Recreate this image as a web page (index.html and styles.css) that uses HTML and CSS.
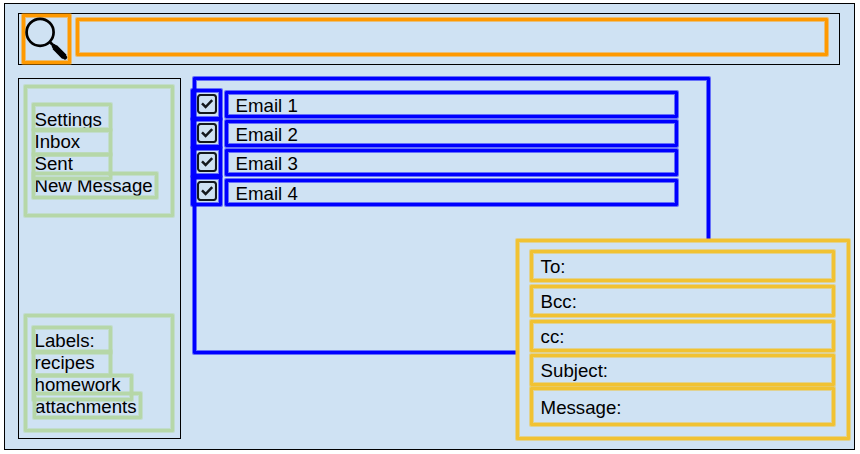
FILE: index.html
```html
<!DOCTYPE html>
<html lang="en">
<head>
<meta charset="utf-8">
<title>Mail</title>
<link rel="stylesheet" href="styles.css">
</head>
<body>
<svg class="defs" aria-hidden="true">
  <symbol id="check" viewBox="0 0 20 20">
    <rect x="1" y="1" width="18" height="18" rx="2.6" fill="none" stroke="#14191d" stroke-width="2.1"/>
    <path d="M5 9.4 8.6 13 15.2 6.2" fill="none" stroke="#14191d" stroke-width="2.5"/>
  </symbol>
</svg>
<div class="app">
  <header class="search">
    <div class="search-icon outline">
      <svg width="49" height="50" viewBox="0 0 49 50">
        <circle cx="18.1" cy="18.3" r="13.5" fill="none" stroke="#000" stroke-width="2.7"/>
        <path d="M27.6 27.8 32 32" stroke="#000" stroke-width="2.8"/>
        <path d="M32.6 33 42.4 42.8" stroke="#000" stroke-width="6"/>
        <path d="M32 32.4 43 43.4" stroke="#000" stroke-width="4.4" stroke-linecap="round"/>
      </svg>
    </div>
    <div class="search-input outline"></div>
  </header>
  <div class="body">
    <nav class="sidebar">
      <ul class="group outline folders">
        <li><span>Settings</span></li>
        <li><span>Inbox</span></li>
        <li><span>Sent</span></li>
        <li><span>New Message</span></li>
      </ul>
      <ul class="group outline labels">
        <li><span>Labels:</span></li>
        <li><span>recipes</span></li>
        <li><span>homework</span></li>
        <li><span>attachments</span></li>
      </ul>
    </nav>
    <main class="inbox outline">
      <div class="checks">
        <div class="check outline"><svg><use href="#check"/></svg></div>
        <div class="check outline"><svg><use href="#check"/></svg></div>
        <div class="check outline"><svg><use href="#check"/></svg></div>
        <div class="check outline"><svg><use href="#check"/></svg></div>
      </div>
      <div class="emails">
        <div class="email outline">Email 1</div>
        <div class="email outline">Email 2</div>
        <div class="email outline">Email 3</div>
        <div class="email outline last">Email 4</div>
      </div>
    </main>
    <form class="compose outline">
      <div class="field outline to">To:</div>
      <div class="field outline bcc">Bcc:</div>
      <div class="field outline cc">cc:</div>
      <div class="field outline subject">Subject:</div>
      <div class="field outline message">Message:</div>
    </form>
  </div>
</div>
</body>
</html>
```
FILE: styles.css
```css
* { box-sizing: border-box; }

body {
  margin: 0;
  padding: 3px 0 0 4px;
  background: #fff;
  color: #000;
  font: 18.67px/22px "Liberation Sans", Arial, sans-serif;
  overflow: hidden;
}

.defs { position: absolute; width: 0; height: 0; }

.app {
  width: 851px;
  height: 447px;
  padding: 9px 13px;
  border: 1px solid #000;
  background: #cfe2f3;
}

/* 3px line with a half-tone pixel on either side */
.outline,
.group li::after {
  border: 3px solid var(--line);
  border-radius: 1px;
  box-shadow: 0 0 0 1px var(--soft), inset 0 0 0 1px var(--soft);
}

.search {
  --line: #ff9900;
  --soft: rgba(255, 153, 0, .5);
  display: flex;
  gap: 5px;
  width: 822px;
  height: 52px;
  padding-left: 3px;
  border: 1px solid #000;
}
.search-icon { width: 49px; height: 50px; }
.search-icon svg { display: block; margin: -3px; }
.search-input { width: 752px; height: 38px; margin-top: 4px; }

.body {
  position: relative;
  display: flex;
  gap: 12px;
  margin-top: 13px;
}

.sidebar {
  --line: #b6d7a8;
  --soft: rgba(182, 215, 168, .5);
  display: flex;
  flex-direction: column;
  justify-content: space-between;
  width: 163px;
  height: 361px;
  padding: 6px 5px;
  border: 1px solid #000;
}
.group {
  isolation: isolate;
  width: 150px;
  margin: 0;
  padding: 15px 5px;
  list-style: none;
}
.folders { height: 132px; }
.labels { height: 118px; padding-top: 9px; }
.group li {
  position: relative;
  width: 80px;
  height: 27px;
  padding-left: 2.5px;
  white-space: nowrap;
}
.group li span { display: block; }
.group li::after {
  content: "";
  position: absolute;
  inset: 0;
  z-index: 1;
}
.folders li:nth-child(1) { height: 28px; padding-top: 6px; }
.folders li:nth-child(2) { margin-top: -2px; padding-top: 2px; }
.folders li:nth-child(3) { margin-top: -3px; }
.folders li:nth-child(4) { width: 126px; margin-top: -8px; padding-top: 3px; }
.labels li:nth-child(1) { height: 28px; padding-top: 4px; }
.labels li:nth-child(2) { margin-top: -4px; padding-top: 2px; }
.labels li:nth-child(3) { width: 101px; margin-top: -3px; }
.labels li:nth-child(4) { width: 109px; margin: -9px 0 0 1px; padding: 4px 0 0 2px; }

.inbox {
  --line: #0000ff;
  --soft: rgba(0, 0, 255, .5);
  display: flex;
  gap: 3px;
  width: 517px;
  height: 277px;
  margin-top: -1px;
}
.checks { margin: 9px 0 0 -5px; }
.check { width: 31px; height: 30px; padding: 2px 2px 2px 3px; }
.check + .check { margin-top: -1px; }
.check:first-child { height: 31px; }
.check:nth-child(2) { margin-top: -2px; }
.check svg { display: block; width: 20px; height: 20px; }
.emails { display: flex; flex-direction: column; gap: 2px; margin-top: 11px; }
.email { width: 453px; height: 27px; padding-left: 7.6px; line-height: 23px; }
.email.last { margin-top: 1px; }

.compose {
  --line: #f1c232;
  --soft: rgba(241, 194, 50, .5);
  position: absolute;
  left: 498px;
  top: 161px;
  width: 334px;
  height: 201px;
  padding: 8px 11px;
  background: #cfe2f3;
}
.field {
  width: 305px;
  height: 32px;
  margin-bottom: 3px;
  padding-left: 7.6px;
  line-height: 28px;
}
.field.cc { margin-bottom: 2px; }
.field.subject { margin-bottom: 1px; }
.field.message { height: 39px; line-height: 35px; }
```
